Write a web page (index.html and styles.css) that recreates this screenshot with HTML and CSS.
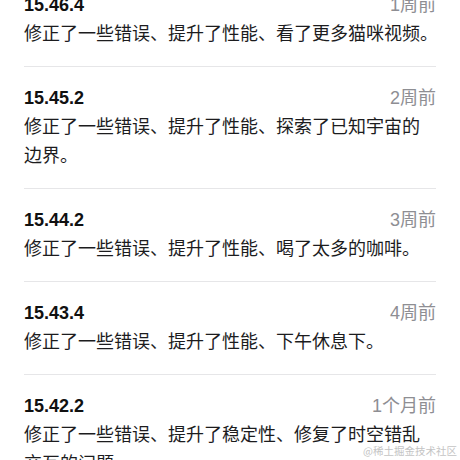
FILE: index.html
```html
<!DOCTYPE html>
<html lang="zh-CN">
<head>
    <meta charset="UTF-8">
    <meta name="viewport" content="width=device-width, initial-scale=1.0">
    <title>版本历史</title>
    <link rel="stylesheet" href="styles.css">
</head>
<body>
    <div class="page">
        <!-- 版本记录 -->
        <ul class="versions">
            <li class="version">
                <div class="version-head">
                    <h3>15.46.4</h3>
                    <span class="time">1周前</span>
                </div>
                <p class="notes">修正了一些错误、提升了性能、看了更多猫咪视频<span class="stop">。</span></p>
            </li>
            <li class="version">
                <div class="version-head">
                    <h3>15.45.2</h3>
                    <span class="time">2周前</span>
                </div>
                <p class="notes">修正了一些错误、提升了性能、探索了已知宇宙的边界<span class="stop">。</span></p>
            </li>
            <li class="version">
                <div class="version-head">
                    <h3>15.44.2</h3>
                    <span class="time">3周前</span>
                </div>
                <p class="notes">修正了一些错误、提升了性能、喝了太多的咖啡<span class="stop">。</span></p>
            </li>
            <li class="version">
                <div class="version-head">
                    <h3>15.43.4</h3>
                    <span class="time">4周前</span>
                </div>
                <p class="notes">修正了一些错误、提升了性能、下午休息下<span class="stop">。</span></p>
            </li>
            <li class="version">
                <div class="version-head">
                    <h3>15.42.2</h3>
                    <span class="time">1个月前</span>
                </div>
                <p class="notes">修正了一些错误、提升了稳定性、修复了时空错乱交互的问题<span class="stop">。</span></p>
            </li>
        </ul>
        <!-- 水印 -->
        <div class="watermark">@稀土掘金技术社区</div>
    </div>
</body>
</html>
```

FILE: styles.css
```css
*{
    padding: 0;
    margin: 0;
    list-style: none;
    box-sizing: border-box;
}
html, body{
    width: 100%;
    height: 100%;
}
body{
    font-family: "Liberation Sans", "Noto Sans CJK SC", sans-serif;
    background: #fff;
    color: #000;
}

.page{
    width: 100%;
    height: 100%;
    overflow: hidden;
    position: relative;
}
.versions{
    margin: -26px 24px 0;
}
.version{
    padding: 20px 0 17px;
    border-bottom: 1px solid #e6e6e8;
}
.version-head{
    display: flex;
    justify-content: space-between;
    align-items: baseline;
    height: 22px;
    line-height: 22px;
}
.version-head h3{
    font-size: 18px;
    font-weight: bold;
    color: #111;
}
.time{
    font-size: 18px;
    color: #8e8e93;
}
.notes{
    margin-top: 4px;
    font-size: 18px;
    line-height: 29px;
    color: #1c1c1e;
}
/* 行尾句号用半角宽度，和系统排版一致 */
.notes .stop{
    font-feature-settings: "halt";
}
.watermark{
    position: absolute;
    right: 3px;
    bottom: 2px;
    font-family: "Noto Sans CJK SC", sans-serif;
    font-size: 10.5px;
    line-height: 14px;
    color: #c4c4c4;
}
```
